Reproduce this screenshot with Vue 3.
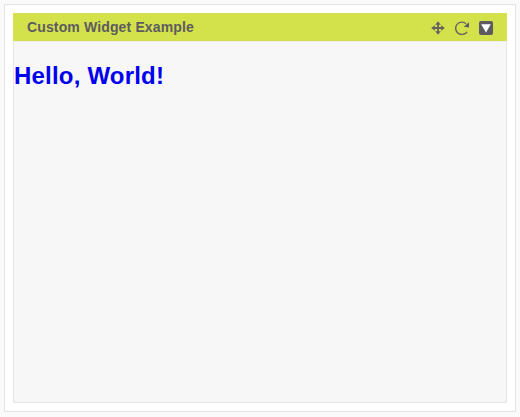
<script setup>
const title = 'Custom Widget Example'
const message = 'Hello, World!'
</script>

<template>
  <main class="page">
    <section class="frame">
      <div class="widget">
        <header class="bar">
          <span class="title">{{ title }}</span>
          <div class="tools">
            <svg width="14" height="14" viewBox="0 0 14 14">
              <path d="M7 0.2L9.8 3.8H4.2ZM7 13.8L4.2 10.2H9.8ZM0.2 7L3.8 4.2V9.8ZM13.8 7L10.2 9.8V4.2Z" fill="#656260" />
              <path d="M7 3V11M3 7H11" stroke="#656260" stroke-width="1.8" />
            </svg>
            <svg width="14" height="14" viewBox="0 0 14 14">
              <path d="M11 2.7A6.2 6.2 0 1 0 12 10.8" fill="none" stroke="#656260" stroke-width="1.4" />
              <path d="M8.8 5.8L14 1.2V6.4Z" fill="#5d5b60" />
            </svg>
            <svg width="14" height="14" viewBox="0 0 14 14">
              <rect width="14" height="14" rx="2" fill="#5d5b60" />
              <path d="M2.2 3.2H11.8L7 11.4Z" fill="#fff" />
            </svg>
          </div>
        </header>
        <div class="body"><h1>{{ message }}</h1></div>
      </div>
    </section>
  </main>
</template>

<style>
body { background: #fafafa; }
</style>
<style scoped>
.page { box-sizing: border-box; width: 520px; height: 417px; padding: 4px 4px 5px; background: #fafafa; font-family: "Liberation Sans", Arial, sans-serif; }
.frame { box-sizing: border-box; width: 512px; height: 408px; padding: 8px; background: #fff; border: 1px solid #e4e4e4; }
.widget { display: flex; flex-direction: column; width: 494px; height: 390px; }
.bar { box-sizing: border-box; display: flex; align-items: center; justify-content: space-between; height: 28px; padding: 0 14px; background: #d3e14b; }
.title { font-size: 14px; font-weight: 700; letter-spacing: 0.14px; color: #5d5b60; }
.tools { display: flex; gap: 10px; padding-top: 2px; }
.tools svg { display: block; }
.body { flex: 1; box-sizing: border-box; border: 1px solid #e4e4e4; border-top-color: #ececec; background: #f7f7f7; padding-top: 20px; }
h1 { margin: 0; font-size: 24px; line-height: 28px; font-weight: 700; letter-spacing: 0.2px; color: #0000ee; }
</style>
